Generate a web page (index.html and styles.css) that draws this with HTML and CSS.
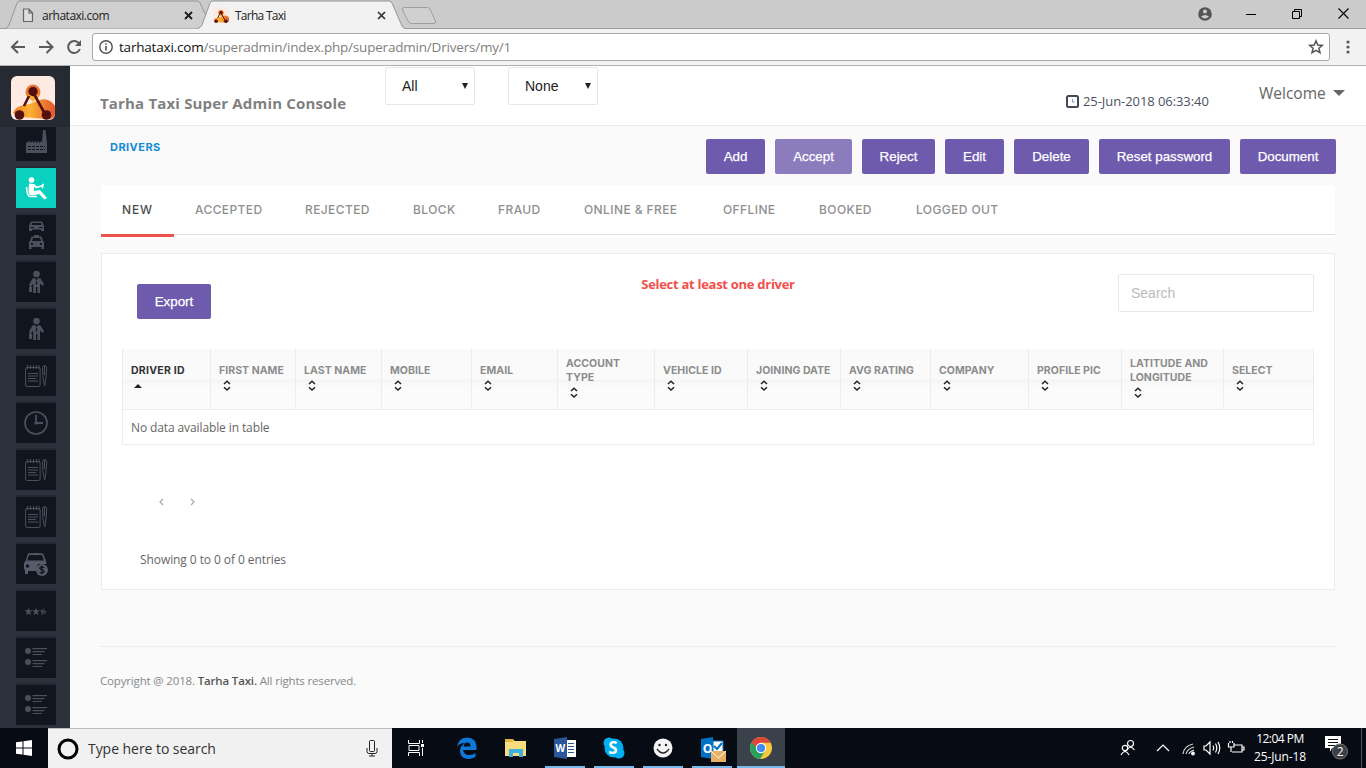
FILE: index.html
```html
<!DOCTYPE html>
<html lang="en">
<head>
<meta charset="utf-8">
<title>Tarha Taxi</title>
<link rel="stylesheet" href="styles.css">
</head>
<body>
<svg class="defs" width="0" height="0">
  <defs>
    <linearGradient id="taxi" x1="0" x2="1" y1="0" y2="0"><stop offset="0" stop-color="#f07f2d"/><stop offset=".4" stop-color="#fbb12f"/><stop offset="1" stop-color="#e2562f"/></linearGradient>
    <symbol id="logo" viewBox="0 0 44 44">
      <rect width="44" height="44" rx="6" fill="#fdebe3"/>
      <path d="M2 37Q4 31 12 29Q20 28 26 25Q37 20 44 30V38Q43 43 38 43L8 41Z" fill="url(#taxi)"/>
      <circle cx="22" cy="16" r="7.500" fill="#ee7a35"/><path d="M15.500 19L22 26L28 19Z" fill="#f9ab30"/>
      <path d="M18 20L13 30M23 18L34 38" stroke="#54100f" stroke-width="2.600"/>
      <circle cx="22" cy="15.500" r="4.700" fill="#54100f"/><circle cx="8.500" cy="39" r="4.800" fill="#54100f"/><circle cx="35.500" cy="39" r="4.800" fill="#54100f"/>
    </symbol>
    <symbol id="man" viewBox="0 0 40 40">
      <circle cx="20.500" cy="12" r="3.300"/>
      <path fill-rule="evenodd" d="M16.500 16.500L19 16L20.500 18.500L22 16L24.500 16.500L28 22L26.500 24L24 21.500V31H21.400V25H20V31H17.200V21.500L15.500 24L15 25H16V30H13V25H13.600L13.300 22ZM20 19L19.800 22L20.500 23L21.200 22L21 19Z"/>
    </symbol>
    <symbol id="notes" viewBox="0 0 40 40">
      <g fill="none" stroke="#4a505c"><rect x="9.600" y="11.500" width="14.500" height="19" rx="1.500"/><path d="M11.500 9V13M14.500 9V13M17.500 9V13M20.500 9V13M23 9V13M12 17.500H22M12 20H22M12 22.500H20M12 25H22"/><path d="M28.700 9.500Q26.500 10 26.500 12L27 22L28.700 30L30 22L30.700 12Q30.700 10 28.700 9.500ZM28.500 10V19"/></g>
    </symbol>
    <symbol id="list" viewBox="0 0 40 40">
      <circle cx="12" cy="13" r="3"/><circle cx="12" cy="24" r="3"/>
      <path d="M16.500 10H31V11.200H16.500ZM16.500 13H28.500V14.200H16.500ZM16.500 16H26V17H16.500ZM16.500 22H31V23.200H16.500ZM16.500 25H28.500V26.200H16.500ZM16.500 28H26V29H16.500Z"/>
    </symbol>
    <symbol id="sort" viewBox="0 0 8 12"><path d="M1 4L4 1.200L7 4M1 7.200L4 10L7 7.200" fill="none" stroke="#222" stroke-width="1.500"/></symbol>
  </defs>
</svg>

<div class="tabstrip">
  <svg class="tabshapes" width="1366" height="29">
    <path d="M0 28.500H1366" stroke="#9b9b9b"/>
    <path d="M6 28.500Q8 27 9 25L17 3Q18 1 20 1H197Q199 1 200 3L212 28.500" fill="#cfcfcf" stroke="#959595"/>
    <path d="M198 29Q201 27 202 25L210 3Q211 1 213 1H389Q391 1 392 3L402 26Q403 28 405 29Z" fill="#f2f2f2"/>
    <path d="M198 28.500Q201 27 202 25L210 3Q211 1 213 1H389Q391 1 392 3L402 26Q403 28 405 28.500" fill="none" stroke="#959595"/>
    <path d="M404 7.500H427Q429 7.500 430 9L435.500 21Q436 23.500 434 23.500H412Q409 23.500 408 21L402.500 10Q402 7.500 404 7.500Z" fill="#d0d0d0" stroke="#9f9f9f"/>
  </svg>
  <div class="tab tab-first">
    <svg width="12" height="15"><path d="M1.500 1H7L10.500 5V13.500H1.500ZM7 1V5H10.500" fill="#ddd" stroke="#666" stroke-width="1.200"/></svg>
    <span class="tab-a">arhataxi.com</span>
    <svg class="close" width="9" height="9"><path d="M1 1L8 8M8 1L1 8" stroke="#1b1b1b" stroke-width="1.800"/></svg>
  </div>
  <div class="tab tab-active">
    <svg width="16" height="16"><use href="#logo"/></svg>
    <span class="tab-b">Tarha Taxi</span>
    <svg class="close" width="9" height="9"><path d="M1 1L8 8M8 1L1 8" stroke="#333" stroke-width="1.700"/></svg>
  </div>
  <div class="winbtns">
    <svg width="14" height="14" viewBox="0 0 14 14"><circle cx="7" cy="7" r="6.800" fill="#555"/><circle cx="7" cy="4.600" r="2" fill="#ccc"/><path d="M3 9.500Q7 6.500 11 9.500Q7 13.500 3 9.500Z" fill="#ccc"/></svg>
    <svg width="10" height="14"><path d="M0 7.500H10" stroke="#000"/></svg>
    <svg width="10" height="10"><path d="M.5 2.500H7.500V9.500H.5ZM2.500 2.500V.5H9.500V7.500H7.500" fill="none" stroke="#000"/></svg>
    <svg width="11" height="11"><path d="M.5 .5L10.500 10.500M10.500 .5L.5 10.500" stroke="#000" stroke-width="1.100"/></svg>
  </div>
</div>

<div class="toolbar">
  <svg class="nav" width="92" height="36" fill="none" stroke="#5a5a5e" stroke-width="2"><path d="M25 18H12.500M18 12L12 18L18 24M39 18H52M46.500 12L52.500 18L46.500 24"/><path d="M79 14.500A6 6 0 1 0 79.800 20"/><path d="M81 11V17H75Z" fill="#5a5a5e" stroke="none"/></svg>
  <div class="urlbar">
    <svg width="14" height="14"><circle cx="7" cy="7" r="6.200" fill="none" stroke="#4c4c4c" stroke-width="1.400"/><path d="M7 6V10.500M7 3.300V4.800" stroke="#4c4c4c" stroke-width="1.600"/></svg>
    <span class="url"><b>tarhataxi.com</b>/superadmin/index.php/superadmin/Drivers/my/1</span>
    <svg class="star" width="16" height="16" viewBox="0 0 16 16"><path d="M8 1.800L9.800 6L14.300 6.400L10.900 9.300L12 13.700L8 11.400L4 13.700L5.100 9.300L1.700 6.400L6.200 6Z" fill="none" stroke="#555" stroke-width="1.500"/></svg>
  </div>
  <svg width="4" height="14" fill="#5a5a5e"><circle cx="2" cy="2" r="1.600"/><circle cx="2" cy="7" r="1.600"/><circle cx="2" cy="12" r="1.600"/></svg>
</div>

<div class="page">
  <nav class="sidebar">
    <div class="brand"><svg width="44" height="44"><use href="#logo"/></svg></div>
    <div class="menu">
      <div class="item first"><svg viewBox="0 0 40 40"><path d="M10 32V22L14 20V22L17 20V22L20 20V22L23 20V22L26 20V22L27 9H29.500L31 22V32Z"/><path d="M12 25.500H29M12 28.500H29" stroke="#11151d" stroke-dasharray="3 1"/></svg></div>
      <div class="item active"><svg viewBox="0 0 40 40" fill="#fff"><circle cx="15.500" cy="12" r="2.800"/><path d="M13 15.500L18 16L21 18.500L26 17L26.500 15.500L28 16L27 20.500L25.500 20.300L25.700 18.500L20.500 20.500L18 19V23L24 22L31 30L28.500 31.500L23 26L16 27.500Q13 27 12.500 24Z"/><path d="M10.500 19Q11 28 14 28.500L21 28.500" fill="none" stroke="#fff" stroke-width="1.600"/></svg></div>
      <div class="item"><svg viewBox="0 0 40 40"><path fill-rule="evenodd" d="M15 6.500H26L27.500 9.500L28 11V16H25V14.500H16V16H13V11L13.500 9.500ZM16 8L15.500 10H25.500L25 8ZM14.500 12V13H18V12ZM23 12V13H26.500V12ZM18 20H23V21.500H25.500L27 26L28 27V34H25.500V32H15.500V34H13V27L14 26L15.500 21.500H18ZM17 23L16 26H25L24 23ZM15 28V30H17V28ZM24 28V30H26V28Z"/></svg></div>
      <div class="item"><svg><use href="#man"/></svg></div>
      <div class="item"><svg><use href="#man"/></svg></div>
      <div class="item"><svg><use href="#notes"/></svg></div>
      <div class="item"><svg viewBox="0 0 40 40"><circle cx="20" cy="20" r="11" fill="none" stroke="#4a505c" stroke-width="1.700"/><path d="M20 12V20H27" fill="none" stroke="#4a505c" stroke-width="1.800"/><circle cx="20" cy="20" r="1.800"/></svg></div>
      <div class="item"><svg><use href="#notes"/></svg></div>
      <div class="item"><svg><use href="#notes"/></svg></div>
      <div class="item"><svg class="cash" viewBox="0 0 40 40"><path fill-rule="evenodd" d="M12 9.500Q20 8.500 27 9.500L30 17L30.500 20H22L20 27H12V30H9V27L8 24V19L9.500 17ZM13 11L11 16.500H28L26 11Z"/><circle cx="11.500" cy="22" r="1.700" fill="#11151d"/><circle cx="26" cy="26" r="6" /><path d="M28.300 23.500Q24 21.800 23.800 24.200Q24 25.500 26 25.800Q28.500 26.400 28 28Q27 29.800 23.700 28.300M26 21.700V30.300" fill="none" stroke="#11151d" stroke-width="1.300"/></svg></div>
      <div class="item"><svg viewBox="0 0 40 40"><path id="st" d="M12.500 16.500L13.500 19.300H16.300L14.200 21.200L15 24.200L12.500 22.500L10 24.200L10.800 21.200L8.700 19.300H11.500Z"/><use href="#st" x="7.500"/><path d="M27.500 16.500V22.500L25 24.200L25.800 21.200L23.700 19.300H26.500ZM28.300 18L29 20H30.800L29.300 21.300L29.800 23.500L28.300 22.500Z"/></svg></div>
      <div class="item"><svg><use href="#list"/></svg></div>
      <div class="item"><svg><use href="#list"/></svg></div>
    </div>
  </nav>

  <main class="main">
    <header class="header">
      <h1>Tarha Taxi Super Admin Console</h1>
      <div class="select s1">All<i></i></div>
      <div class="select s2">None<i></i></div>
      <div class="clock"><svg width="13" height="13"><rect x="1" y="1" width="11" height="11" rx="1.500" fill="#fff" stroke="#414858" stroke-width="2"/><path d="M6.500 4V7H9" fill="none" stroke="#6f9ccc"/></svg><span>25-Jun-2018 06:33:40</span></div>
      <div class="welcome"><span>Welcome</span><i></i></div>
    </header>

    <div class="content">
      <div class="actions">
        <span class="crumb">DRIVERS</span>
        <div class="buttons">
          <span class="btn">Add</span><span class="btn hover">Accept</span><span class="btn">Reject</span><span class="btn">Edit</span><span class="btn">Delete</span><span class="btn">Reset password</span><span class="btn">Document</span>
        </div>
      </div>
      <div class="tabs">
        <span class="on">NEW</span><span>ACCEPTED</span><span>REJECTED</span><span>BLOCK</span><span>FRAUD</span><span>ONLINE &amp; FREE</span><span>OFFLINE</span><span>BOOKED</span><span>LOGGED OUT</span>
      </div>
      <section class="panel">
        <div class="panel-top">
          <span class="btn">Export</span>
          <strong>Select at least one driver</strong>
          <div class="search">Search</div>
        </div>
        <div class="table">
          <div class="thead">
            <div class="th sorted"><span>DRIVER ID</span><i></i></div>
            <div class="th"><span>FIRST NAME</span><svg><use href="#sort"/></svg></div>
            <div class="th"><span>LAST NAME</span><svg><use href="#sort"/></svg></div>
            <div class="th"><span>MOBILE</span><svg><use href="#sort"/></svg></div>
            <div class="th"><span>EMAIL</span><svg><use href="#sort"/></svg></div>
            <div class="th"><span>ACCOUNT<br>TYPE</span><svg><use href="#sort"/></svg></div>
            <div class="th"><span>VEHICLE ID</span><svg><use href="#sort"/></svg></div>
            <div class="th"><span>JOINING DATE</span><svg><use href="#sort"/></svg></div>
            <div class="th"><span>AVG RATING</span><svg><use href="#sort"/></svg></div>
            <div class="th"><span>COMPANY</span><svg><use href="#sort"/></svg></div>
            <div class="th"><span>PROFILE PIC</span><svg><use href="#sort"/></svg></div>
            <div class="th"><span>LATITUDE AND<br>LONGITUDE</span><svg><use href="#sort"/></svg></div>
            <div class="th"><span>SELECT</span><svg><use href="#sort"/></svg></div>
          </div>
          <div class="empty">No data available in table</div>
        </div>
        <div class="pager"><svg width="5" height="8"><path d="M4 1L1 4L4 7" fill="none" stroke="#aaa" stroke-width="1.200"/></svg><svg width="5" height="8"><path d="M1 1L4 4L1 7" fill="none" stroke="#aaa" stroke-width="1.200"/></svg></div>
        <div class="info">Showing 0 to 0 of 0 entries</div>
      </section>
      <footer class="footer">Copyright @ 2018. <b>Tarha Taxi.</b> All rights reserved.</footer>
    </div>
  </main>
</div>

<div class="taskbar">
  <div class="start"><svg width="16" height="16" fill="#fff"><path d="M0 2.300L6.500 1.400V7.500H0ZM7.500 1.200L16 0V7.500H7.500ZM0 8.500H6.500V14.600L0 13.700ZM7.500 8.500H16V16L7.500 14.800Z"/></svg></div>
  <div class="find">
    <svg width="22" height="22"><circle cx="11" cy="11" r="9" fill="none" stroke="#000" stroke-width="3"/></svg>
    <span>Type here to search</span>
    <svg class="mic" width="12" height="17" fill="none" stroke="#222"><rect x="3.500" y=".5" width="5" height="11" rx="1"/><path d="M1 8V11.500Q1 13.500 3 13.500H9Q11 13.500 11 11.500V8M6 13.500V16M3 16H9" /></svg>
  </div>
  <div class="app view"><svg width="17" height="16" fill="none" stroke="#fff"><path d="M.5 0V3.500H11.500V0M.5 16V12.500H11.500V16M1 5.500H11V10.500H1ZM14.500 0V3M14.500 8V16"/><path d="M13 4H16V7H13Z" fill="#fff" stroke="none"/></svg></div>
  <div class="app"><svg width="22" height="22"><path d="M1 10Q2 1 11 .5Q20 1 20.500 9V13H7Q8 18 13 18Q17 18 19.500 16V20Q16 22 12 22Q4 21 4 14Q4 9 9 6Q3 6 1 10ZM7.500 9.500H14.500Q14.500 5.500 11 5.500Q8 6 7.500 9.500Z" fill="#0d78d7" fill-rule="evenodd"/></svg></div>
  <div class="app"><svg width="22" height="20"><path d="M0 1H8L9.500 3H21V18H0Z" fill="#f9dc7b"/><path d="M0 1H8V4H0Z" fill="#e5b63d"/><path d="M4 19V11H18V19H14V15H8V19Z" fill="#3eb0e2"/></svg></div>
  <div class="app run"><svg width="22" height="22"><path d="M12 3H22V20H12Z" fill="#fff"/><path d="M14 6.500H20M14 9.500H20M14 12.500H20M14 15.500H20" stroke="#2b579a"/><path d="M0 2L13 0V22L0 20Z" fill="#2b579a"/><text x="1.500" y="15" class="glyph" font-size="10">W</text></svg></div>
  <div class="app run"><svg width="22" height="22"><circle cx="11" cy="11" r="9.500" fill="#00aff0"/><circle cx="6" cy="6" r="5.500" fill="#00aff0"/><circle cx="16" cy="16" r="5.500" fill="#00aff0"/><text x="5.200" y="17" class="glyph" font-size="17">S</text></svg></div>
  <div class="app run"><svg width="22" height="22"><circle cx="11" cy="11" r="9.500" fill="#f4f4f4"/><circle cx="7.500" cy="8" r="1.200" fill="#222"/><circle cx="14" cy="8" r="1.200" fill="#222"/><path d="M5 12Q11 20 17 12" fill="none" stroke="#222" stroke-width="1.300"/></svg></div>
  <div class="app run"><svg class="outlook" width="26" height="26"><path d="M12 4H22V17H12Z" fill="#fff" stroke="#0072c6"/><path d="M13 9L16 12L21 6" fill="none" stroke="#0072c6" stroke-width="2"/><path d="M0 2L12 0V22L0 20Z" fill="#0072c6"/><text x="1.800" y="15.500" class="glyph" font-size="12">O</text><path d="M10 14H25V25H10Z" fill="#e8b066"/><path d="M10 14L17.500 21L25 14" fill="none" stroke="#fff"/></svg></div>
  <div class="app run current"><svg width="22" height="22"><circle cx="11" cy="11" r="11" fill="#f5c93b"/><path d="M1.500 5.500A11 11 0 0 0 10 22L15 14L11 11Z" fill="#27a15b"/><path d="M1.500 5.500A11 11 0 0 1 20.600 5.700H11L7 11Z" fill="#dc483b"/><circle cx="11" cy="11" r="5.200" fill="#fff"/><circle cx="11" cy="11" r="4.100" fill="#4688f1"/></svg></div>
  <div class="tray">
    <svg width="132" height="18" fill="none" stroke="#fff" stroke-width="1.200"><circle cx="10.500" cy="4.500" r="3"/><path d="M7 11Q10.500 5.500 14.500 11"/><circle cx="5" cy="9" r="2.700"/><path d="M1 16Q5 9 9 16M37 12L43 6L49 12"/><path d="M63 15Q64 7 73 5M66 15Q67 10 74 8M69 15Q69 13 74 11" stroke="#ddd"/><circle cx="73" cy="14.500" r="1.300" fill="#fff"/><path d="M84 7H86L90 3V15L86 11H84ZM93 6.500Q94.500 9 93 11.500M95.500 4.500Q98 9 95.500 13.500M98 3Q101.500 9 98 15"/><path d="M114 6H122V13H112M122.500 8H124V11H122.500M108.500 4V8H114V4M110 2V4M112.500 2V4M111 8V13"/></svg>
    <div class="time"><span class="t1">12:04 PM</span><span class="t2">25-Jun-18</span></div>
    <svg width="26" height="26"><path d="M1 1H17V13H8L6 17V13H1Z" fill="#fff"/><path d="M4 4.500H14M4 7.500H14M4 10.500H11" stroke="#111"/><circle cx="16" cy="16.500" r="7.500" fill="#3b3e44" stroke="#777"/><text x="12.700" y="21" class="two" font-size="12">2</text></svg>
  </div>
  <div class="edge"></div>
</div>
</body>
</html>
```
FILE: styles.css
```css
* { box-sizing: border-box; }
body { margin: 0; width: 1366px; height: 768px; overflow: hidden; display: flex; flex-direction: column; font-family: "Open Sans", "Noto Sans", sans-serif; font-size: 12px; color: #666; }
.defs { position: absolute; }
svg { display: block; flex: none; }
span, strong, h1 { white-space: nowrap; }

/* browser chrome */
.tabstrip { position: relative; height: 29px; background: #cbcbcb; display: flex; flex: none; align-items: center; }
.tabshapes { position: absolute; left: 0; top: 0; }
.tab { position: relative; display: flex; align-items: center; font-size: 12px; color: #222; padding-top: 1px; }
.tab-first { margin-left: 22px; width: 171px; gap: 8px; }
.tab-active { margin-left: 20px; width: 173px; gap: 6px; }
.tab-a { letter-spacing: -.5px; }
.tab-b { letter-spacing: -.75px; letter-spacing: -.72px; }
.tab-a { letter-spacing: -.5px; }
.tab-b { letter-spacing: -.75px; }
.tab .tab-b { letter-spacing: -.75px; }
.tab .tab-b { letter-spacing: -.74px; }
.close { margin-left: auto; }
.winbtns { position: relative; margin-left: auto; margin-right: 17px; display: flex; align-items: center; gap: 36px; padding-bottom: 2px; }
.winbtns svg:first-child { margin-right: -2px; }
.toolbar { height: 37px; flex: none; background: #f2f2f2; border-bottom: 1px solid #b2b2b2; display: flex; align-items: center; }
.urlbar { width: 1238px; height: 28px; background: #fff; border: 1px solid #a9a9a9; border-radius: 3px; display: flex; align-items: center; padding: 0 5px 0 6px; margin-right: 16px; }
.url { margin-left: 6px; font-size: 13.500px; color: #808080; letter-spacing: -.2px; padding-bottom: 1px; }
.url b { font-weight: 400; color: #111; }
.star { margin-left: auto; }

/* sidebar */
.page { flex: 1; display: flex; min-height: 0; background: #fafafa; }
.sidebar { width: 70px; background: #2d313c; overflow: hidden; flex: none; }
.brand { height: 61px; background: #262a33; padding: 10px 0 0 11px; }
.menu { display: grid; justify-content: center; margin-left: 2px; }
.item { width: 40px; height: 47px; padding-top: 7px; }
.item svg { width: 40px; height: 40px; background: #11151d; fill: #4a505c; box-shadow: 0 -2px 0 #252933; }
.item.active svg { background: #0ad1bf; fill: #fff; }
.item .cash { fill: #565c69; }
.item.first { height: 34px; padding: 0; overflow: hidden; }
.item.first svg { margin-top: -6px; }

/* header */
.main { flex: 1; min-width: 0; }
.header { height: 60px; background: #fff; border-bottom: 1px solid #e8e8e8; display: flex; padding-left: 30px; }
h1 { margin: 26px 0 0; width: 285px; font-size: 15px; line-height: 22px; color: #808080; letter-spacing: .17px; }
.select { margin-top: 1px; width: 90px; height: 38px; border: 1px solid #e8e8e8; border-radius: 2px; font: 14px/36px "Liberation Sans", Arial, sans-serif; color: #222; padding: 0 6px 0 16px; display: flex; justify-content: space-between; align-items: center; }
.s2 { margin-left: 33px; }
.select i { border: 3.500px solid transparent; border-top: 6px solid #222; border-bottom: 0; }
.clock { margin: 26px 0 0 468px; height: 18px; display: flex; align-items: center; gap: 4px; width: 193px; font-size: 13px; color: #4b5265; letter-spacing: -.07px; }
.welcome { margin-top: 16px; height: 22px; display: flex; align-items: center; gap: 7px; font-size: 15.500px; color: #666; }
.welcome i { border: 6px solid transparent; border-top-color: #666; border-bottom: 0; }

/* content */
.content { padding: 0 30px; }
.actions { height: 59px; padding-top: 13px; display: flex; justify-content: space-between; }
.crumb { margin-left: 10px; font: bold 11px/17px Inter, sans-serif; color: #148bd6; letter-spacing: .45px; }
.buttons { display: grid; gap: 10px; grid-template-columns: 59px 77px 73px 59px 75px 131px 96px; }
.btn { height: 35px; border-radius: 2px; background: #6e5bad; color: #fff; font: 13.333px/35px "Liberation Sans", Arial, sans-serif; text-align: center; -webkit-text-stroke: .25px #fff; }
.btn.hover { background: #8b7dbd; }
.tabs { margin-left: 1px; width: 1234px; height: 53px; background: linear-gradient(#fff 49px, #e2e2e2 49px, #e2e2e2 50px, #fff 50px); display: grid; grid-template-columns: 73px 110px 108px 85px 86px 139px 96px 97px 126px; font: 500 12px/50px Inter, sans-serif; color: #8f8f8f; letter-spacing: .4px; }
.tabs span { padding-left: 21px; height: 52px; }
.tabs .on { border-bottom: 3px solid #ec534d; color: #4d4d4d; letter-spacing: .8px; }
.panel { margin: 15px 0 0 1px; width: 1234px; height: 337px; background: #fff; border: 1px solid #ececec; padding: 20px 20px 0; }
.panel-top { display: flex; justify-content: space-between; height: 75px; }
.panel-top .btn { margin: 10px 0 0 15px; width: 74px; }
.panel-top strong { margin: 1px 0 0 107px; line-height: 18px; color: #f1504c; font-size: 13px; letter-spacing: -.28px; }
.search { width: 196px; height: 38px; border: 1px solid #e8e8e8; border-radius: 2px; padding-left: 12px; font: 14px/36px "Liberation Sans", Arial, sans-serif; color: #bbb; }
.table { width: 1192px; border: 1px solid #ececec; border-top: 0; }
.thead { height: 61px; display: grid; grid-template-columns: 88px 85px 86px 90px 86px 97px 93px 93px 90px 98px 93px 102px 89px; background: linear-gradient(#fafafa 30px, #f5f5f5 31px, #fbfbfb 38px); border-bottom: 1px solid #ececec; }
.th { border-right: 1px solid #ececec; padding: 0 0 3px 8px; display: flex; flex-direction: column; justify-content: center; gap: 2px; font: bold 10.500px/14px Inter, sans-serif; color: #8c8c8c; letter-spacing: .05px; }
.th:last-child { border-right: 0; }
.th svg { width: 8px; height: 12px; margin-left: 4px; }
.sorted { color: #333; letter-spacing: .25px; }
.sorted i { margin: 4px 0 4px 3px; width: 0; border: 4px solid transparent; border-top: 0; border-bottom-color: #222; }
.empty { height: 34px; line-height: 36px; padding-left: 8px; letter-spacing: -.11px; }
.pager { display: flex; gap: 26px; margin: 53px 0 0 37px; }
.info { margin: 45px 0 0 18px; line-height: 18px; letter-spacing: -.08px; }
.footer { margin-top: 56px; border-top: 1px solid #ececec; padding-top: 25px; line-height: 18px; color: #888; letter-spacing: -.16px; font-size: 11.500px; }
.footer b { color: #555; font-weight: 600; }

/* taskbar */
.taskbar { height: 40px; flex: none; background: #060b14; display: flex; color: #fff; }
.start { width: 48px; padding: 12px 0 0 16px; }
.find { width: 344px; background: #f1f1f1; border-top: 1px solid #bbb; display: flex; align-items: center; padding: 0 14px 0 9px; color: #333; font-size: 14px; }
.find span { margin-left: 9px; letter-spacing: -.05px; }
.mic { margin-left: auto; }
.app { width: 48px; margin-right: 1px; display: flex; align-items: center; justify-content: center; }
.view { margin-right: 3px; }
.run { background: linear-gradient(#76b9ed, #76b9ed) center bottom / 40px 2px no-repeat; }
.current { background: linear-gradient(#3b414a 38px, #76b9ed 38px); }
.outlook { margin: 4px 0 0 4px; }
.glyph { font-family: "Open Sans", sans-serif; font-weight: 700; fill: #fff; }
.two { font-family: "Open Sans", sans-serif; fill: #fff; }
.tray { margin-left: auto; display: flex; align-items: center; }
.tray > svg:first-child { margin-right: -4px; }
.time { width: 64px; margin: 0 12px 0 0; display: flex; flex-direction: column; align-items: center; font-size: 12px; line-height: 18px; }
.t1 { letter-spacing: -.5px; }
.t2 { letter-spacing: -.1px; }
.edge { width: 5px; margin-left: 11px; border-left: 1px solid #555; }
```
